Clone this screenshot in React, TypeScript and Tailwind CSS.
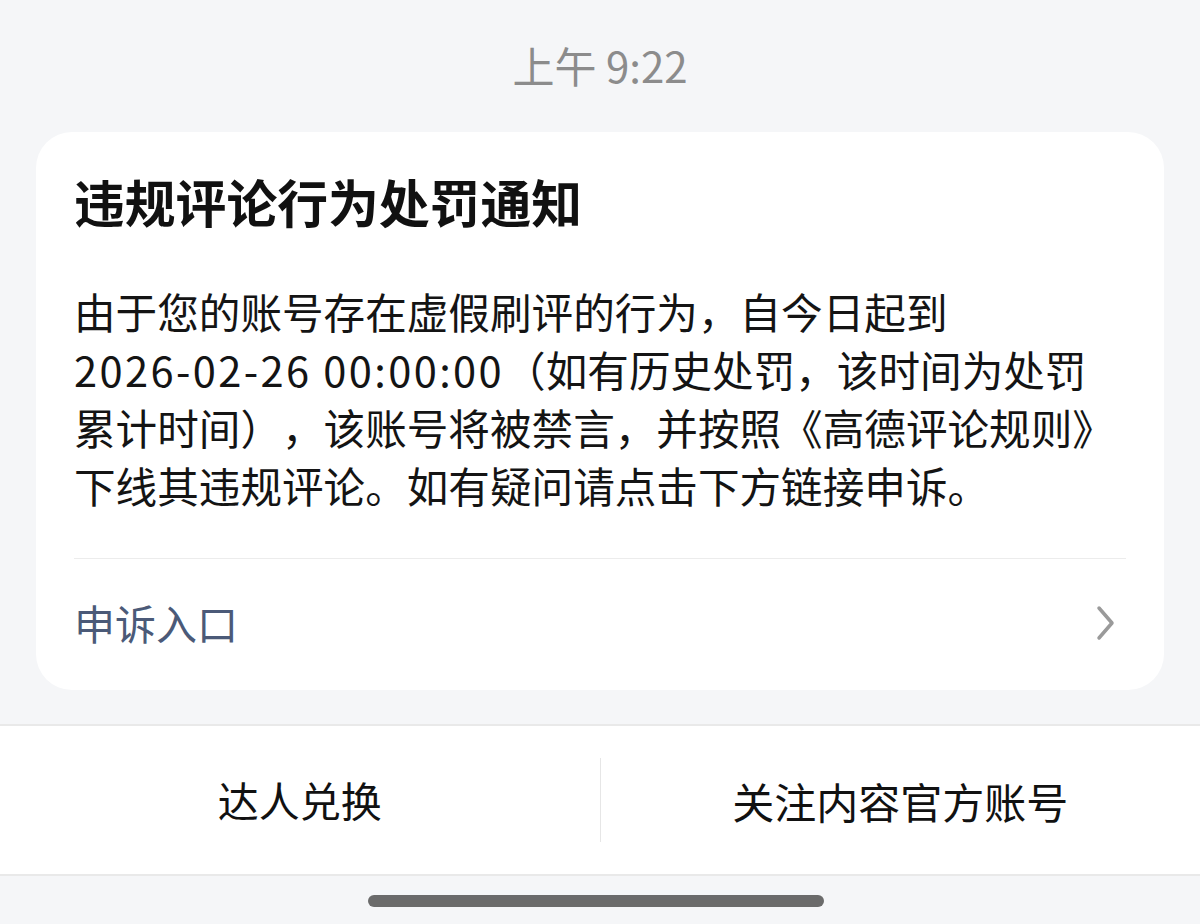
import React from "react";

const font = { fontFamily: '"Noto Sans CJK SC", "Noto Sans", sans-serif' };

export default function App() {
  return (
    <div
      className="w-[1200px] h-[924px] bg-[#f5f6f8] flex flex-col overflow-hidden [text-spacing-trim:space-all]"
      style={font}
    >
      <div className="pt-[37px] h-[132px] text-center text-[42px] leading-[56px] text-[#8c8c8c]">
        上午 9:22
      </div>
      <div className="mx-[36px] bg-white rounded-[36px] px-[38px]">
        <div className="pt-[34px] text-[50.8px] leading-[70px] font-bold text-[#111] whitespace-nowrap">
          违规评论行为处罚通知
        </div>
        <div className="mt-[46px] text-[41.6px] leading-[58px] text-[#141414] whitespace-nowrap">
          <div>由于您的账号存在虚假刷评的行为，自今日起到</div>
          <div>
            <span className="tracking-[2.4px]">2026-02-26 00:00:00</span>（如有历史处罚，该时间为处罚
          </div>
          <div>累计时间），该账号将被禁言，并按照《高德评论规则》</div>
          <div>下线其违规评论。如有疑问请点击下方链接申诉。</div>
        </div>
        <div className="mt-[44px] h-[1px] bg-[#ececec]" />
        <div className="h-[131px] flex items-center justify-between">
          <span className="text-[41px] leading-[56px] -mt-[6px] text-[#4b5a78]">申诉入口</span>
          <svg width="20" height="36" viewBox="0 0 20 36" className="mr-[10px] -mt-[4px]">
            <path
              d="M3 3 L16 18 L3 33"
              fill="none"
              stroke="#9a9a9a"
              strokeWidth="3.5"
              strokeLinecap="round"
              strokeLinejoin="round"
            />
          </svg>
        </div>
      </div>
      <div className="mt-[34px] h-[152px] bg-white border-t-2 border-b-2 border-[#e9e9e9] flex items-center">
        <div className="flex-1 text-center text-[41px] text-[#111]">达人兑换</div>
        <div className="w-[1px] h-[84px] bg-[#e6e6e6]" />
        <div className="flex-1 text-center text-[42px] text-[#111]">关注内容官方账号</div>
      </div>
      <div className="flex mt-[19px] pl-[368px]">
        <div className="w-[456px] h-[12px] rounded-full bg-[#6b6b6b]" />
      </div>
    </div>
  );
}
